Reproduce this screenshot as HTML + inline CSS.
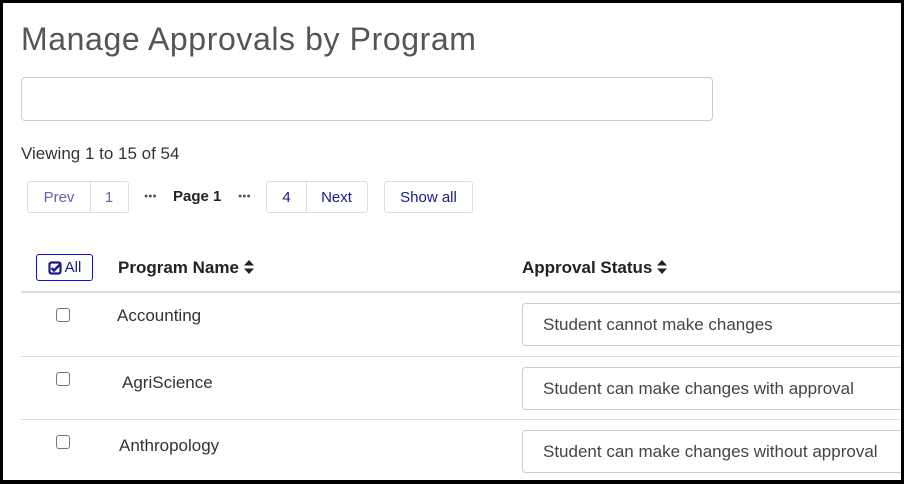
<!DOCTYPE html>
<html><head><meta charset="utf-8"><style>
*{box-sizing:border-box;margin:0;padding:0}
body{width:904px;height:484px;overflow:hidden;background:#fff;font-family:"Liberation Sans",Arial,sans-serif;color:#333;position:relative}
.frame{position:absolute;left:0;top:0;width:904px;height:484px;border:solid #000;border-width:3px 3px 4px 3px;pointer-events:none;z-index:10}
.a{position:absolute}
h1{position:absolute;left:21px;top:21px;font-size:32px;font-weight:300;color:#555;letter-spacing:0.6px;white-space:nowrap}
.inp{left:21px;top:77px;width:692px;height:44px;border:1px solid #ccc;border-radius:4px}
.view{left:21px;top:144px;font-size:17px;color:#333}
.pg{top:181px;height:32px;border:1px solid #ddd;display:flex;align-items:center;justify-content:center;font-size:15px;color:#1a1a8c}
.dots{top:193px;font-size:7px;color:#555;letter-spacing:0px}
.hd{top:258px;font-size:17px;font-weight:bold;color:#222;white-space:nowrap}
.allb{left:36px;top:254px;width:57px;height:27px;border:1px solid #1a1a8c;border-radius:3px;color:#1a1a8c;font-size:15px;display:flex;align-items:center;justify-content:center;gap:3px}
.line{left:21px;width:883px;background:#ddd}
.cb{left:56px;width:14px;height:14px;border:1.5px solid #777;border-radius:3px}
.nm{font-size:17px;color:#333;white-space:nowrap}
.sel{left:522px;width:400px;height:43px;border:1px solid #ccc;border-radius:4px;font-size:17px;color:#444;padding:11px 0 0 20px;white-space:nowrap}
</style></head><body>
<div class="frame"></div>
<h1>Manage Approvals by Program</h1>
<div class="a inp"></div>
<div class="a view">Viewing 1 to 15 of 54</div>
<div class="a pg" style="left:27px;width:64px;border-radius:3px 0 0 3px;color:#6a5fb0">Prev</div>
<div class="a pg" style="left:90px;width:39px;border-left:none;border-radius:0 3px 3px 0;color:#6a5fb0">1</div>
<div class="a dots" style="left:144px">●●●</div>
<div class="a" style="left:173px;top:188px;font-size:15px;font-weight:bold;color:#222">Page 1</div>
<div class="a dots" style="left:238px">●●●</div>
<div class="a pg" style="left:266px;width:41px;border-radius:3px 0 0 3px">4</div>
<div class="a pg" style="left:306px;width:62px;border-left:none;border-radius:0 3px 3px 0">Next</div>
<div class="a pg" style="left:384px;width:89px;border-radius:3px">Show all</div>
<div class="a allb"><svg width="14" height="14" viewBox="0 0 14 14"><rect x="1.5" y="1.5" width="11" height="11" rx="2" fill="none" stroke="#1a1a8c" stroke-width="2.2"/><path d="M3.5 7l2.5 2.5L12.5 3" fill="none" stroke="#1a1a8c" stroke-width="2.4"/></svg>All</div>
<div class="a hd" style="left:118px">Program Name <svg width="10" height="14" viewBox="0 0 10 14" style="vertical-align:-1px"><path d="M5 0L10 5.5H0z M5 14L0 8.5H10z" fill="#222"/></svg></div>
<div class="a hd" style="left:522px">Approval Status <svg width="10" height="14" viewBox="0 0 10 14" style="vertical-align:-1px"><path d="M5 0L10 5.5H0z M5 14L0 8.5H10z" fill="#222"/></svg></div>
<div class="a line" style="top:291px;height:2px"></div>
<div class="a line" style="top:356px;height:1px"></div>
<div class="a line" style="top:419px;height:1px"></div>
<div class="a cb" style="top:308px"></div>
<div class="a cb" style="top:372px"></div>
<div class="a cb" style="top:435px"></div>
<div class="a nm" style="left:117px;top:306px">Accounting</div>
<div class="a nm" style="left:122px;top:373px">AgriScience</div>
<div class="a nm" style="left:119px;top:436px">Anthropology</div>
<div class="a sel" style="top:303px">Student cannot make changes</div>
<div class="a sel" style="top:367px">Student can make changes with approval</div>
<div class="a sel" style="top:430px">Student can make changes without approval</div>
</body></html>
